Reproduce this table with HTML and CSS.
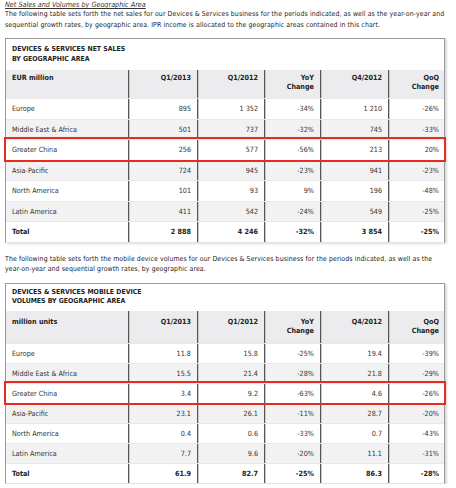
FILE: index.html
```html
<!doctype html>
<html lang="en">
  <head>
    <meta charset="UTF-8" />
    <title>Net Sales and Volumes by Geographic Area</title>
    <link rel="stylesheet" href="styles.css">
  </head>
  <body>
    <h4 class="section-title">Net Sales and Volumes by Geographic Area</h4>
    <p class="intro">
      The following table sets forth the net sales for our Devices &amp; Services business for the periods indicated, as well as the year-on-year and<br>
      sequential growth rates, by geographic area. IPR income is allocated to the geographic areas contained in this chart.
    </p>

    <div class="data-table">
      <div class="table-title">DEVICES &amp; SERVICES NET SALES<br>BY GEOGRAPHIC AREA</div>
      <div class="row head">
        <div class="cell label">EUR million</div>
        <div class="cell">Q1/2013</div>
        <div class="cell">Q1/2012</div>
        <div class="cell">YoY<br>Change</div>
        <div class="cell">Q4/2012</div>
        <div class="cell">QoQ<br>Change</div>
      </div>
      <div class="row">
        <div class="cell label">Europe</div>
        <div class="cell">895</div><div class="cell">1 352</div><div class="cell">-34%</div><div class="cell">1 210</div><div class="cell">-26%</div>
      </div>
      <div class="row alt">
        <div class="cell label">Middle East &amp; Africa</div>
        <div class="cell">501</div><div class="cell">737</div><div class="cell">-32%</div><div class="cell">745</div><div class="cell">-33%</div>
      </div>
      <div class="row marked">
        <div class="cell label">Greater China</div>
        <div class="cell">256</div><div class="cell">577</div><div class="cell">-56%</div><div class="cell">213</div><div class="cell">20%</div>
      </div>
      <div class="row alt">
        <div class="cell label">Asia-Pacific</div>
        <div class="cell">724</div><div class="cell">945</div><div class="cell">-23%</div><div class="cell">941</div><div class="cell">-23%</div>
      </div>
      <div class="row">
        <div class="cell label">North America</div>
        <div class="cell">101</div><div class="cell">93</div><div class="cell">9%</div><div class="cell">196</div><div class="cell">-48%</div>
      </div>
      <div class="row alt">
        <div class="cell label">Latin America</div>
        <div class="cell">411</div><div class="cell">542</div><div class="cell">-24%</div><div class="cell">549</div><div class="cell">-25%</div>
      </div>
      <div class="row total">
        <div class="cell label">Total</div>
        <div class="cell">2 888</div><div class="cell">4 246</div><div class="cell">-32%</div><div class="cell">3 854</div><div class="cell">-25%</div>
      </div>
    </div>

    <p class="intro second">
      The following table sets forth the mobile device volumes for our Devices &amp; Services business for the periods indicated, as well as the<br>
      year-on-year and sequential growth rates, by geographic area.
    </p>

    <div class="data-table volumes">
      <div class="table-title">DEVICES &amp; SERVICES MOBILE DEVICE<br>VOLUMES BY GEOGRAPHIC AREA</div>
      <div class="row head">
        <div class="cell label">million units</div>
        <div class="cell">Q1/2013</div>
        <div class="cell">Q1/2012</div>
        <div class="cell">YoY<br>Change</div>
        <div class="cell">Q4/2012</div>
        <div class="cell">QoQ<br>Change</div>
      </div>
      <div class="row">
        <div class="cell label">Europe</div>
        <div class="cell">11.8</div><div class="cell">15.8</div><div class="cell">-25%</div><div class="cell">19.4</div><div class="cell">-39%</div>
      </div>
      <div class="row alt">
        <div class="cell label">Middle East &amp; Africa</div>
        <div class="cell">15.5</div><div class="cell">21.4</div><div class="cell">-28%</div><div class="cell">21.8</div><div class="cell">-29%</div>
      </div>
      <div class="row marked">
        <div class="cell label">Greater China</div>
        <div class="cell">3.4</div><div class="cell">9.2</div><div class="cell">-63%</div><div class="cell">4.6</div><div class="cell">-26%</div>
      </div>
      <div class="row alt">
        <div class="cell label">Asia-Pacific</div>
        <div class="cell">23.1</div><div class="cell">26.1</div><div class="cell">-11%</div><div class="cell">28.7</div><div class="cell">-20%</div>
      </div>
      <div class="row">
        <div class="cell label">North America</div>
        <div class="cell">0.4</div><div class="cell">0.6</div><div class="cell">-33%</div><div class="cell">0.7</div><div class="cell">-43%</div>
      </div>
      <div class="row alt">
        <div class="cell label">Latin America</div>
        <div class="cell">7.7</div><div class="cell">9.6</div><div class="cell">-20%</div><div class="cell">11.1</div><div class="cell">-31%</div>
      </div>
      <div class="row total">
        <div class="cell label">Total</div>
        <div class="cell">61.9</div><div class="cell">82.7</div><div class="cell">-25%</div><div class="cell">86.3</div><div class="cell">-28%</div>
      </div>
    </div>
  </body>
</html>
```

FILE: styles.css
```css
body {
  font-family: "DejaVu Sans Condensed", "DejaVu Sans", sans-serif;
  font-size: 7.2px;
  color: #333;
  background-color: white;
  margin: 0;
  padding: 0 5px;
  width: 440px;
}
.section-title {
  margin: 0;
  font-size: 7.2px;
  font-weight: normal;
  font-style: italic;
  text-decoration: underline;
  line-height: 9px;
  color: #333;
}
.intro {
  margin: 0;
  font-size: 6.9px;
  line-height: 10.5px;
  letter-spacing: 0.1px;
  white-space: nowrap;
  color: #222;
}
.intro.second {
  margin-top: 11px;
}
.data-table {
  margin-top: 8px;
  border: 1px solid #999;
  border-bottom: 1px solid #e4e4e4;
  box-shadow: 2px 1px 2px rgba(0, 0, 0, 0.15);
  background-color: white;
}
.table-title {
  height: 31px;
  box-sizing: border-box;
  padding: 6px 6px 0;
  font-weight: bold;
  font-size: 6.9px;
  line-height: 9.5px;
  color: #222;
}
.volumes .table-title {
  height: 27px;
  padding-top: 4px;
}
.row {
  display: grid;
  grid-template-columns: 122px 69px 67px 56px 68px 57px;
  box-sizing: border-box;
  height: 20.5px;
  align-items: stretch;
}
.volumes .row {
  height: 20px;
}
.row.alt {
  background-color: #f2f2f3;
}
.row + .row {
  border-top: 1px solid #e8e8e8;
}
.row.head {
  height: 28px;
  background-color: #ececee;
  font-weight: bold;
  color: #222;
}
.volumes .row.head {
  height: 32px;
}
.cell {
  padding: 0 6px;
  text-align: right;
  display: flex;
  align-items: center;
  justify-content: flex-end;
  border-left: 1px solid #555;
  box-shadow: inset 1px 0 0 #c8c8c8;
}
.head .cell {
  align-items: flex-start;
  padding-top: 3px;
  line-height: 9px;
}
.volumes .head .cell {
  padding-top: 6px;
}
.cell.label {
  justify-content: flex-start;
  text-align: left;
  border-left: none;
  box-shadow: none;
}
.row.total {
  font-weight: bold;
  color: #222;
}
.row.marked {
  outline: 2px solid #e82b1e;
  outline-offset: 0;
  position: relative;
}
```
